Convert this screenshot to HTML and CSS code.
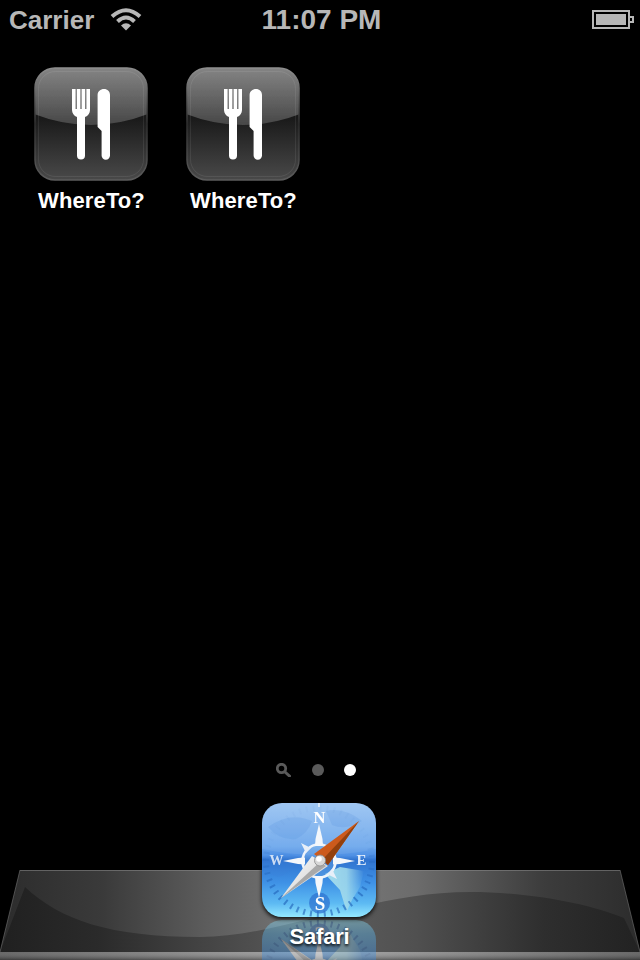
FILE: index.html
```html
<!DOCTYPE html>
<html lang="en">
<head>
<meta charset="utf-8">
<title>Home screen</title>
<link rel="stylesheet" href="styles.css">
</head>
<body>
<svg class="defs" width="0" height="0" aria-hidden="true">
  <defs>
    <filter id="soft" x="0" y="0" width="1" height="1"><feGaussianBlur stdDeviation=".45"/></filter>
    <linearGradient id="appTop" x1="0" y1="0" x2="0" y2="1"><stop offset="0" stop-color="#858585"/><stop offset="1" stop-color="#474747"/></linearGradient>
    <linearGradient id="appBot" x1="0" y1="0" x2="0" y2="1"><stop offset="0" stop-color="#161616"/><stop offset=".45" stop-color="#1a1a1a"/><stop offset="1" stop-color="#4a4a4a"/></linearGradient>
    <linearGradient id="appRim" x1="0" y1="0" x2="0" y2="1"><stop offset="0" stop-color="#8e8e8e"/><stop offset=".5" stop-color="#2e2e2e"/><stop offset="1" stop-color="#5c5c5c"/></linearGradient>
    <linearGradient id="safBg" x1="0" y1="0" x2="0" y2="1">
      <stop offset="0" stop-color="#98c2f1"/><stop offset=".38" stop-color="#6aa6ec"/><stop offset=".46" stop-color="#4f90e4"/><stop offset=".5" stop-color="#2f73cf"/><stop offset=".7" stop-color="#3f92e6"/><stop offset=".88" stop-color="#5dbaf3"/><stop offset="1" stop-color="#94e8ff"/>
    </linearGradient>
    <linearGradient id="land" x1="0" y1="0" x2="1" y2="0"><stop offset="0" stop-color="#a4dcec"/><stop offset=".55" stop-color="#a4dcec" stop-opacity=".85"/><stop offset="1" stop-color="#a4dcec" stop-opacity="0"/></linearGradient>
    <linearGradient id="ticks" gradientUnits="userSpaceOnUse" x1="0" y1="40" x2="0" y2="90"><stop offset="0" stop-color="#1d5fb6" stop-opacity=".04"/><stop offset="1" stop-color="#1d5fb6" stop-opacity=".6"/></linearGradient>
    <linearGradient id="needleW" x1="0" y1="0" x2="1" y2="1"><stop offset="0" stop-color="#fff"/><stop offset="1" stop-color="#c8c8c8"/></linearGradient>
    <clipPath id="appClip"><rect x="1" y="1" width="112" height="112" rx="20"/></clipPath>
    <clipPath id="safClip"><rect width="114" height="114" rx="20"/></clipPath>
    <symbol id="appIcon" viewBox="0 0 114 114">
      <g clip-path="url(#appClip)">
        <rect width="114" height="114" fill="url(#appBot)"/>
        <path d="M0 0H114V47Q57 69 0 47Z" fill="url(#appTop)" filter="url(#soft)"/>
      </g>
      <rect x="1" y="1" width="112" height="112" rx="20" fill="none" stroke="url(#appRim)" stroke-width="1.500"/>
      <rect x="4.500" y="4.500" width="105" height="105" rx="17" fill="none" stroke="#fff" stroke-opacity=".08"/>
      <g filter="url(#soft)">
        <path d="M38 22h3.600v20h1.200V22h3.600v20h1.200V22h3.600v20h1.200V22H56v21c0 3-2 6-5 7v38.500a4 4 0 0 1-8 0V50c-3-1-5-4-5-7Z" fill="#fff"/>
        <path d="M70 22c3.500 0 6 2.500 6 6V88.500a4.200 4.200 0 0 1-8.400 0V64l-4-4V28c0-3.500 2.900-6 6.400-6Z" fill="#fff"/>
      </g>
    </symbol>
    <symbol id="safari" viewBox="0 0 114 114">
      <g clip-path="url(#safClip)">
        <rect width="114" height="114" fill="url(#safBg)"/>
        <path d="M6 24Q28 8 50 18Q46 30 34 36Q18 38 6 24Z M0 58Q18 46 36 54Q34 68 16 74Q6 70 0 66Z M64 8Q82 4 100 18Q84 28 70 22Z" fill="#3f7fd6" fill-opacity=".18"/>
        <path d="M63 71L78 64L102 68L98 84L90 97L85 108L82 100L78 87Z" fill="url(#land)" filter="url(#soft)"/>
        <circle cx="57" cy="58" r="53" fill="none" stroke="url(#ticks)" stroke-width="6" stroke-dasharray="2 4.940"/>
        <path d="M0 0H114V46Q57 58 0 46Z" fill="#fff" fill-opacity=".08"/>
        <circle cx="57.500" cy="100" r="10.500" fill="#2c6fce" fill-opacity=".7"/>
        <g filter="url(#soft)">
          <circle cx="57" cy="58" r="16.500" fill="#8cc0ea" fill-opacity=".22" stroke="#eef4fb" stroke-width="2.600"/>
          <path d="M57 21L60.500 36L61 43H53L53.500 36Z" fill="#f4f7fb"/>
          <path d="M57 95L60.500 80L61 73H53L53.500 80Z" fill="#f4f7fb"/>
          <path d="M21 58L36 55L43 54.500V61.500L36 61Z" fill="#f4f7fb"/>
          <path d="M93 58L78 55L71 54.500V61.500L78 61Z" fill="#f4f7fb"/>
          <path d="M39 40L49 45L44 50Z M75 40L65 45L70 50Z M39 76L49 71L44 66Z M75 76L65 71L70 66Z" fill="#e8eff8"/>
          <text class="compass-letter letter-n" x="57.500" y="20" text-anchor="middle">N</text>
          <text class="compass-letter letter-s" x="58" y="107" text-anchor="middle">S</text>
          <text class="compass-letter letter-e" x="99.500" y="62" text-anchor="middle">E</text>
          <text class="compass-letter letter-w" x="14.500" y="62" text-anchor="middle">W</text>
          <rect x="56" y="0" width="2" height="4" fill="#fff" fill-opacity=".6"/>
          <path d="M97 18L52 51L66 62Z" fill="#cc5a1c"/>
          <path d="M97 18L66 62L60 57Z" fill="#93410f"/>
          <path d="M19 95L50 53L66 63Z" fill="url(#needleW)"/>
          <path d="M19 95L58 59L64 63Z" fill="#a9a9a9"/>
          <circle cx="58" cy="57.500" r="5.500" fill="#d8d8d8" stroke="#8a8a8a" stroke-width=".8"/>
          <circle cx="57" cy="56" r="2.800" fill="#fff"/>
        </g>
      </g>
    </symbol>
    <linearGradient id="dockBase" x1="0" y1="0" x2="1" y2="0">
      <stop offset="0" stop-color="#2c2c2c"/><stop offset=".16" stop-color="#3a3a3a"/><stop offset=".32" stop-color="#5c5c5c"/><stop offset=".5" stop-color="#7a7a7a"/><stop offset=".65" stop-color="#6c6c6c"/><stop offset=".85" stop-color="#3c3c3c"/><stop offset="1" stop-color="#2c2c2c"/>
    </linearGradient>
    <linearGradient id="dockLow" x1="0" y1="0" x2="1" y2="0">
      <stop offset="0" stop-color="#202020"/><stop offset=".16" stop-color="#2b2b2b"/><stop offset=".32" stop-color="#444"/><stop offset=".5" stop-color="#5e5e5e"/><stop offset=".65" stop-color="#505050"/><stop offset=".85" stop-color="#2e2e2e"/><stop offset="1" stop-color="#222"/>
    </linearGradient>
    <linearGradient id="dockFront" x1="0" y1="0" x2="1" y2="0">
      <stop offset="0" stop-color="#5a5a5a"/><stop offset=".5" stop-color="#a0a0a0"/><stop offset="1" stop-color="#5a5a5a"/>
    </linearGradient>
    <linearGradient id="dockFrontShade" x1="0" y1="0" x2="0" y2="1"><stop offset="0" stop-color="#fff" stop-opacity=".08"/><stop offset="1" stop-color="#000" stop-opacity=".35"/></linearGradient>
  </defs>
</svg>

<main class="screen">
  <header class="status">
    <div class="status-left">
      <span>Carrier</span>
      <svg class="wifi" viewBox="0 0 32 24" width="32" height="24" aria-hidden="true">
        <path d="M2 9.500Q16-3 30 9.500" class="wifi-arc"/>
        <path d="M7.500 14.500Q16 6.500 24.500 14.500" class="wifi-arc"/>
        <path d="M16 23.500L11 18.500Q16 14 21 18.500Z" class="wifi-dot"/>
      </svg>
    </div>
    <div class="status-time">11:07 PM</div>
    <div class="status-right">
      <div class="battery"><div class="battery-fill"></div></div>
      <div class="battery-nub"></div>
    </div>
  </header>

  <section class="apps">
    <div class="app">
      <svg class="icon" width="114" height="114"><use href="#appIcon"/></svg>
      <div class="label">WhereTo?</div>
    </div>
    <div class="app">
      <svg class="icon" width="114" height="114"><use href="#appIcon"/></svg>
      <div class="label">WhereTo?</div>
    </div>
  </section>

  <nav class="pager" aria-label="Pages">
    <svg class="pager-search" viewBox="0 0 15 14" width="15" height="14" aria-hidden="true">
      <circle cx="5.500" cy="5.500" r="4.200" fill="none" stroke="#5a5a5a" stroke-width="2.800"/>
      <path d="M9 9L13.500 13" stroke="#5a5a5a" stroke-width="3" stroke-linecap="round"/>
    </svg>
    <span class="dot"></span>
    <span class="dot dot-on"></span>
  </nav>

  <footer class="dock">
    <svg class="dock-bg" viewBox="0 0 640 90" width="640" height="90" aria-hidden="true">
      <path d="M20 0H620L640 82H0Z" fill="url(#dockBase)"/>
      <path d="M25 17C60 50 110 67 200 67C280 67 370 22 470 22C530 22 590 34 624 48L640 82H0Z" fill="url(#dockLow)"/>
      <path d="M20 .5H620" stroke="#8a8a8a" stroke-opacity=".55"/>
      <path d="M20 0L0 82M620 0L640 82" stroke="#666" stroke-opacity=".7"/>
      <rect y="82" width="640" height="8" fill="url(#dockFront)"/>
      <rect y="82" width="640" height="8" fill="url(#dockFrontShade)"/>
    </svg>
    <div class="dock-app">
      <svg class="icon safari-icon" width="114" height="114"><use href="#safari"/></svg>
      <svg class="reflection" width="114" height="114" aria-hidden="true"><use href="#safari" transform="matrix(1 0 0 -1 0 114)"/></svg>
      <div class="label dock-label">Safari</div>
    </div>
  </footer>
</main>
</body>
</html>
```
FILE: styles.css
```css
* { box-sizing: border-box; }
html, body { margin: 0; background: #000; }
.defs { position: absolute; }
.screen {
  width: 640px;
  height: 960px;
  background: #000;
  display: flex;
  flex-direction: column;
  overflow: hidden;
  font-family: "Liberation Sans", Arial, sans-serif;
  font-weight: 700;
}
.status {
  height: 40px;
  padding: 0 6px 0 9px;
  display: grid;
  grid-template-columns: 1fr auto 1fr;
  align-items: center;
  color: #b7b7b7;
}
.status-left { display: flex; align-items: center; gap: 16px; font-size: 26px; }
.status-time { font-size: 28px; }
.wifi { margin-top: -2px; }
.wifi-arc { fill: none; stroke: #b7b7b7; stroke-width: 4; }
.wifi-dot { fill: #b7b7b7; }
.status-right { display: flex; justify-content: flex-end; align-items: center; margin-top: -2px; }
.battery { width: 38px; height: 19px; border: 2px solid #b7b7b7; padding: 2px; }
.battery-fill { width: 30px; height: 11px; background: #b7b7b7; }
.battery-nub { width: 4px; height: 7px; border: 2px solid #b7b7b7; border-left: 0; }
.apps {
  flex: 1;
  display: flex;
  align-items: flex-start;
  gap: 38px;
  padding: 27px 0 0 34px;
}
.app { width: 114px; display: flex; flex-direction: column; align-items: center; }
.icon { display: block; }
.label {
  width: 150px;
  flex: none;
  margin-top: 6px;
  padding-left: 1px;
  color: #fff;
  font-size: 22px;
  letter-spacing: .12px;
  line-height: 27px;
  text-align: center;
}
.pager {
  display: flex;
  align-items: center;
  justify-content: center;
  gap: 21px;
  padding-right: 8px;
  height: 14px;
  margin-bottom: 26px;
}
.dot { width: 12px; height: 12px; border-radius: 50%; background: #5a5a5a; }
.dot-on { margin-left: -1px; background: #fff; }
.dock {
  position: relative;
  height: 157px;
  display: flex;
  justify-content: center;
  padding-right: 2px;
}
.dock-bg { position: absolute; left: 0; bottom: 0; display: block; }
.dock-app {
  position: relative;
  width: 114px;
  display: flex;
  flex-direction: column;
  align-items: center;
}
.safari-icon { position: relative; z-index: 2; filter: drop-shadow(0 2px 2px rgba(0,0,0,.9)); }
.reflection {
  position: absolute;
  top: 117px;
  left: 0;
  opacity: .4;
}
.dock-label {
  position: relative;
  z-index: 3;
  margin-top: 6px;
  letter-spacing: -.2px;
  text-shadow: 0 2px 3px rgba(0,0,0,.9);
}
.compass-letter {
  font-family: "Liberation Serif", serif;
  font-weight: 700;
  fill: #fff;
}
.letter-n { font-size: 16.500px; }
.letter-s { font-size: 19px; }
.letter-e { font-size: 15px; fill-opacity: .85; }
.letter-w { font-size: 14px; fill-opacity: .75; }
```
